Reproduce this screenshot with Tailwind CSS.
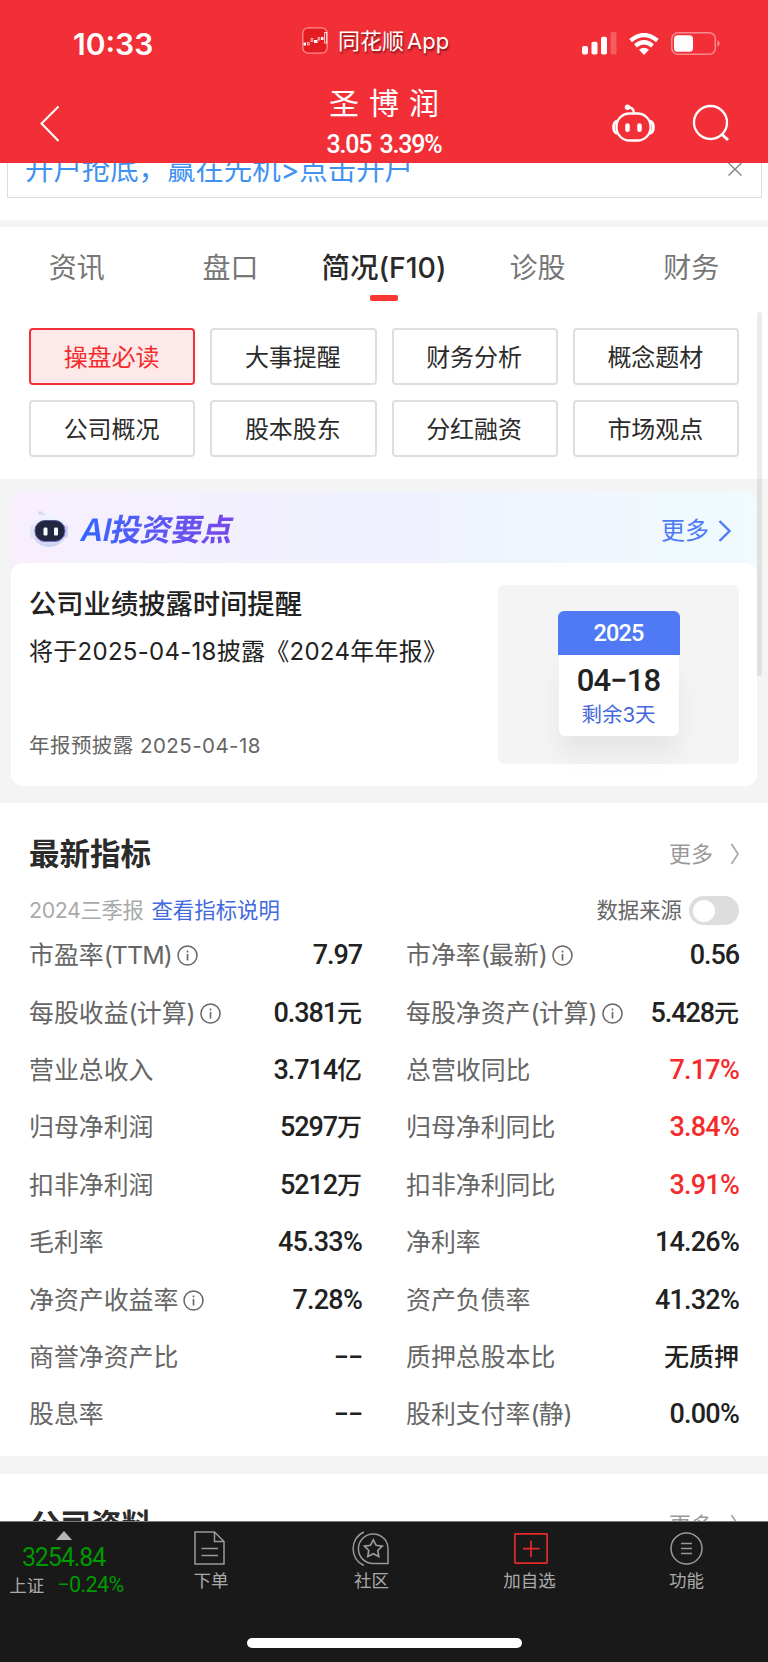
<!DOCTYPE html>
<html lang="zh-CN">
<head>
  <meta charset="UTF-8">
  <meta name="viewport" content="width=device-width, initial-scale=1.0">
  <title>圣博润 - 简况(F10)</title>
  <script src="https://cdn.jsdelivr.net/npm/@tailwindcss/browser@4"></script>
</head>
<body class="bg-white font-['Inter','Noto_Sans_CJK_SC',sans-serif] text-[#222]">
  <div class="relative w-[768px] h-[1662px] overflow-hidden flex flex-col whitespace-nowrap">

    <!-- Header -->
    <header class="bg-[#f22f37] text-white h-[163px] shrink-0">
      <div class="h-[84px] flex items-center">
        <div class="w-[302px] pl-[73px] pt-[3px] text-[30px] leading-none font-semibold">10:33</div>
        <div class="flex items-center w-[280px] pb-[3px]">
          <svg class="w-[26px] h-[27px]" viewBox="0 0 26 27" fill="none">
            <rect x="0.8" y="0.8" width="24.4" height="25.4" rx="5.5" fill="#e31c22" stroke="#fa8d90" stroke-width="1.3"/>
            <path d="M1.500 17h2.500M12 14.500h3.500M19 11.500h2.500" stroke="#fff" stroke-width="3"/>
            <path d="M5.500 15.500h1.800v2.500h-1.800zM9 11.500h1.800v3h-1.800zM16 10.500h1.800v2.500h-1.800z" stroke="#fff" stroke-width="0.7"/>
            <rect x="22.700" y="5.500" width="2" height="10.500" stroke="#fff" stroke-width="0.8"/>
          </svg>
          <span class="ml-[10px] text-[22px] leading-none [text-shadow:1px_2px_2px_rgba(60,0,0,0.6)]">同花顺<span class="ml-[3px]">App</span></span>
        </div>
        <div class="flex items-center gap-[11px] pt-[3px]">
          <svg class="w-[36px] h-[23px]" viewBox="0 0 36 23" fill="#fff">
            <rect x="0" y="14" width="6" height="8.500" rx="1.800"/>
            <rect x="9.500" y="9.700" width="6" height="12.800" rx="1.800"/>
            <rect x="19" y="4.800" width="6" height="17.700" rx="1.800"/>
            <rect x="28.500" y="0" width="6" height="22.500" rx="1.800" opacity="0.22"/>
          </svg>
          <svg class="w-[30px] h-[22px]" viewBox="0 0 30 22" fill="none" stroke="#fff" stroke-width="4.200">
            <path d="M1.600 7.600Q15-3.600 28.400 7.600"/>
            <path d="M6.500 12.800Q15 5.600 23.500 12.800"/>
            <path d="M10 16.800Q15 12.800 20 16.800L15 22z" fill="#fff" stroke="none"/>
          </svg>
          <svg class="ml-[1px] w-[49px] h-[23px]" viewBox="0 0 49 23" fill="none">
            <rect x="0.800" y="0.800" width="43.500" height="21.400" rx="6" stroke="#f98b8f" stroke-width="1.500"/>
            <rect x="3" y="3.200" width="19" height="16.600" rx="3.500" fill="#fff"/>
            <path d="M46.500 8.200q2.200 1 2.200 3.300t-2.200 3.300z" fill="#f98b8f"/>
          </svg>
        </div>
      </div>
      <div class="h-[79px] flex">
        <div class="w-[254px] pl-[39px] pt-[21px]">
          <svg class="w-[22px] h-[38px]" viewBox="0 0 22 38" fill="none" stroke="#fff" stroke-width="2"><path d="M19.500 1.500 2.500 18.500l17 17.500"/></svg>
        </div>
        <div class="w-[260px] flex flex-col items-center">
          <div class="mt-[3px] flex gap-[10px] text-[30px] leading-[32px]"><span>圣</span><span>博</span><span>润</span></div>
          <div class="mt-[12px] font-['Roboto'] text-[25px] leading-[28px] font-medium tracking-[-1.2px] [word-spacing:3px]">3.05 3.39%</div>
        </div>
        <div class="flex pl-[98px] pt-[20px] gap-[37px]">
          <svg class="w-[43px] h-[39px]" viewBox="0 0 43 39" fill="none" stroke="#fff" stroke-width="2.300">
            <rect x="4.500" y="9.500" width="34" height="27" rx="13"/>
            <path d="M5 17c-4.500 1.500-4.500 11 0 12.500M38 17c4.500 1.500 4.500 11 0 12.500" stroke-width="2.800"/>
            <path d="M22 9.500C22 5 19.500 3 15 3"/>
            <circle cx="15.500" cy="3.200" r="2.700" fill="#fff" stroke="none"/>
            <path d="M15.500 21.500v4.200M27.500 21.500v4.200" stroke-width="4.600" stroke-linecap="round"/>
          </svg>
          <svg class="w-[38px] h-[38px]" viewBox="0 0 38 38" fill="none" stroke="#fff" stroke-width="2.300"><circle cx="18.500" cy="18.500" r="16.500"/><path d="M30 30.500l6 5.500" stroke-width="3"/></svg>
        </div>
      </div>
    </header>

    <!-- Ad strip, scrolled under the header -->
    <div class="h-[57px] shrink-0 pl-[7px] pr-[6px]">
      <div class="h-[35px] border border-t-0 border-[#dcdede] overflow-hidden flex justify-between">
        <div class="-mt-[12px] ml-[17px] text-[28.5px] leading-[38px] text-[#3f92ef] tracking-[-0.1px]">开户抢底，赢在先机&gt;点击开户</div>
        <svg class="w-[14px] h-[14px] mr-[19px]" viewBox="0 0 14 14" stroke="#888" stroke-width="1.500"><path d="M0.500 0l13 12.500M13.500 0l-13 12.500"/></svg>
      </div>
    </div>
    <div class="h-[7px] shrink-0 bg-[#f4f4f4]"></div>

    <!-- Tabs -->
    <nav class="h-[101px] shrink-0 grid grid-cols-5 text-center text-[28px] leading-[40px] text-[#777] pt-[21px]">
      <div>资讯</div>
      <div>盘口</div>
      <div class="flex flex-col items-center text-[#2a2a2a] font-medium">
        <span class="text-[28.500px]">简况(F10)</span>
        <span class="mt-[7px] w-[28px] h-[6px] rounded-[2px] bg-[#fb352f]"></span>
      </div>
      <div>诊股</div>
      <div>财务</div>
    </nav>

    <div class="h-[151px] shrink-0 px-[29px] grid grid-cols-4 grid-rows-[57px_57px] gap-[15px] text-[24px] leading-none text-[#2b2b2b]">
      <div class="border-2 border-[#f03238] bg-[#fee9ea] text-[#f52b2b] rounded-[4px] flex items-center justify-center pt-[2px] pr-[1px]">操盘必读</div>
      <div class="border-2 border-[#dedede] rounded-[4px] flex items-center justify-center pt-[2px] pr-[1px]">大事提醒</div>
      <div class="border-2 border-[#dedede] rounded-[4px] flex items-center justify-center pt-[2px] pr-[1px]">财务分析</div>
      <div class="border-2 border-[#dedede] rounded-[4px] flex items-center justify-center pt-[2px] pr-[1px]">概念题材</div>
      <div class="border-2 border-[#dedede] rounded-[4px] flex items-center justify-center pt-[2px] pr-[1px]">公司概况</div>
      <div class="border-2 border-[#dedede] rounded-[4px] flex items-center justify-center pt-[2px] pr-[1px]">股本股东</div>
      <div class="border-2 border-[#dedede] rounded-[4px] flex items-center justify-center pt-[2px] pr-[1px]">分红融资</div>
      <div class="border-2 border-[#dedede] rounded-[4px] flex items-center justify-center pt-[2px] pr-[1px]">市场观点</div>
    </div>

    <!-- AI card -->
    <section class="h-[324px] shrink-0 bg-[#f4f4f4] pt-[12px] pl-[11px] pr-[11px]">
      <div class="h-[295px] rounded-[12px] bg-linear-to-r from-[#f8effe] via-[#eff1fe] to-[#f0fbfe]">
        <div class="h-[72px] flex items-center pl-[18px] pr-[26px]">
          <svg class="w-[40px] h-[38px] mt-[4px]" viewBox="0 0 40 38">
            <defs>
              <linearGradient id="shell" x1="0" y1="0" x2="0" y2="1"><stop offset="0" stop-color="#f2f5fd"/><stop offset="1" stop-color="#ccd3ec"/></linearGradient>
              <linearGradient id="rim" x1="0" y1="0" x2="1" y2="1"><stop offset="0" stop-color="#4a4a78"/><stop offset="1" stop-color="#8b6cf0"/></linearGradient>
            </defs>
            <path d="M11 3q5 0 6 4" fill="none" stroke="#d9e1f1" stroke-width="2" stroke-linecap="round"/>
            <circle cx="11" cy="3" r="2" fill="#cfdaee"/>
            <ellipse cx="20" cy="21" rx="17.500" ry="16" fill="url(#shell)"/>
            <rect x="1" y="15" width="5" height="13" rx="2.500" fill="#dfe4f4"/>
            <rect x="34" y="15" width="5" height="13" rx="2.500" fill="#cbd3ea"/>
            <rect x="6" y="10.500" width="30" height="21" rx="10" fill="#22273f" stroke="url(#rim)" stroke-width="1"/>
            <rect x="14.500" y="17.500" width="4" height="8" rx="1.200" fill="#f3fcff"/>
            <rect x="25" y="17.500" width="4" height="8" rx="1.200" fill="#f3fcff"/>
          </svg>
          <div class="ml-[13px] pt-[6px] text-[31px] leading-[40px] font-bold tracking-[-0.6px] text-transparent bg-clip-text bg-linear-to-r from-[#2d66ff] to-[#7847e8] -skew-x-12"><span class="font-semibold">AI</span>投资要点</div>
          <div class="ml-auto pt-[8px] text-[24px] leading-none text-[#4d7bf8]">更多</div>
          <svg class="ml-[9px] mt-[7px] w-[13px] h-[22px]" viewBox="0 0 13 22" fill="none" stroke="#4d7bf8" stroke-width="2.300"><path d="M1.500 1l10 10-10 10"/></svg>
        </div>
        <div class="h-[223px] bg-white rounded-[12px] flex justify-between pl-[18px] pr-[18px] pt-[22px]">
          <div>
            <div class="mt-[2px] text-[27.300px] leading-[36px] font-medium">公司业绩披露时间提醒</div>
            <div class="mt-[12px] text-[24px] leading-[34px] tracking-[0.28px]">将于2025-04-18披露《2024年年报》</div>
            <div class="mt-[62px] text-[20.500px] leading-[30px] text-[#666] tracking-[0.45px]">年报预披露 2025-04-18</div>
          </div>
          <div class="w-[241px] h-[179px] rounded-[6px] bg-[#f4f4f4] flex flex-col items-center pt-[26px]">
            <div class="z-10 w-[122px] h-[44px] rounded-t-[6px] bg-[#5079f5] text-white font-['Roboto'] text-[23.500px] leading-[44px] text-center font-medium tracking-[-0.8px]">2025</div>
            <div class="w-[120px] h-[81px] rounded-b-[6px] bg-white shadow-[0_18px_24px_rgba(0,0,0,0.06)] text-center">
              <div class="pt-[8px] font-['Roboto'] text-[31px] leading-[36px] font-medium tracking-[-0.9px]">04−18</div>
              <div class="text-[20.500px] leading-[32px] text-[#4468dc]">剩余3天</div>
            </div>
          </div>
        </div>
      </div>
    </section>

    <!-- Latest indicators -->
    <section class="h-[653px] shrink-0 pl-[29px] pr-[29px] pt-[31px]">
      <div class="flex items-center h-[40px] text-[#2b2b2b]">
        <h2 class="text-[30.500px] leading-none font-semibold">最新指标</h2>
        <div class="ml-auto text-[22px] leading-none text-[#999]">更多</div>
        <svg class="ml-[17px] -mt-px w-[9px] h-[22px]" viewBox="0 0 9 22" fill="none" stroke="#aaa" stroke-width="1.800"><path d="M1.500 1l6.500 10-6.500 10"/></svg>
      </div>
      <div class="mt-[22px] flex items-center h-[29px] text-[21.400px] leading-none">
        <span class="text-[#aaa] tracking-[-0.4px]">2024三季报</span>
        <a class="ml-[8px] text-[#4169e1]">查看指标说明</a>
        <span class="ml-auto text-[#666]">数据来源</span>
        <span class="ml-[7px] w-[50px] h-[29px] rounded-full bg-[#ddd] flex items-center pl-[4px]"><span class="w-[22px] h-[22px] rounded-full bg-white"></span></span>
      </div>
      <div id="indicators" class="mt-[2px] grid grid-cols-[333px_333px] gap-x-[44px]"></div>
    </section>

    <div class="h-[18px] shrink-0 bg-[#f4f4f4]"></div>
    <section class="h-[47px] shrink-0 overflow-hidden pl-[30px] pr-[29px] pt-[31px]">
      <div class="flex items-center h-[40px] text-[#2b2b2b]">
        <h2 class="text-[30.500px] leading-none font-semibold">公司资料</h2>
        <div class="ml-auto text-[22px] leading-none text-[#999]">更多</div>
        <svg class="ml-[17px] -mt-px w-[9px] h-[22px]" viewBox="0 0 9 22" fill="none" stroke="#aaa" stroke-width="1.800"><path d="M1.500 1l6.500 10-6.500 10"/></svg>
      </div>
    </section>

    <!-- Bottom bar -->
    <footer class="h-[141px] shrink-0 bg-[#191919] border-t border-[#777] flex flex-col items-center">
      <div class="w-full h-[116px] flex text-[17.500px] leading-[20px] text-[#aaa]">
        <div class="w-[133px] flex flex-col items-center pr-[6px]">
          <svg class="mt-[9px] w-[16px] h-[9px]" viewBox="0 0 16 9" fill="#b5b5b5"><path d="M8 0l8 9H0z"/></svg>
          <div class="mt-[4px] font-['Roboto'] text-[25px] leading-[28px] tracking-[-1.1px] text-[#090]">3254.84</div>
          <div class="mt-[1px] flex items-center gap-[13px] pl-[6px]"><span class="pt-[3px]">上证</span><span class="font-['Roboto'] text-[21.500px] tracking-[-0.6px] text-[#090]">−0.24%</span></div>
        </div>
        <div class="w-[156px] flex flex-col items-center">
          <svg class="mt-[9px] mr-[3px] w-[31px] h-[34px]" viewBox="0 0 31 34" fill="none" stroke="#999" stroke-width="1.500"><path d="M1 1h19.500L30 10.500V33H1zM20.500 1v9.500H30M7.500 17.500h16.500M7.500 24.500h16.500"/></svg>
          <span class="mt-[6px]">下单</span>
        </div>
        <div class="w-[165px] flex flex-col items-center">
          <svg class="mt-[9px] mr-[2px] w-[37px] h-[35px]" viewBox="0 0 37 35" fill="none" stroke="#999" stroke-width="1.500">
            <path d="M12 1C-2.500 7-2.500 28.500 12 34.500"/>
            <path d="M21.500 32.500a14.800 14.800 0 1 1 14.500-15v15z"/>
            <path d="M21.300 8.800l2.800 5.500 6.100.9-4.400 4.300 1 6-5.500-2.800-5.500 2.800 1-6-4.400-4.300 6.100-.9z" stroke-width="1.700"/>
          </svg>
          <span class="mt-[5px]">社区</span>
        </div>
        <div class="w-[151px] flex flex-col items-center">
          <svg class="mt-[11px] ml-[2px] w-[34px] h-[31px]" viewBox="0 0 34 31" fill="none" stroke="#e52a2a" stroke-width="1.700"><rect x="0.900" y="0.900" width="32.200" height="29.200" rx="0.500"/><path d="M17 7.500v16.500M9 15.700h16.500"/></svg>
          <span class="mt-[7px]">加自选</span>
        </div>
        <div class="flex-1 flex flex-col items-center">
          <svg class="mt-[10px] w-[33px] h-[33px]" viewBox="0 0 33 33" fill="none" stroke="#999" stroke-width="1.500"><circle cx="16.500" cy="16.500" r="15.500"/><path d="M11 11.500h11M11 16.500h11M11 21.500h11"/></svg>
          <span class="mt-[6px]">功能</span>
        </div>
      </div>
      <div class="w-[275px] h-[10px] rounded-full bg-white"></div>
    </footer>

    <!-- Scroll indicator -->
    <div class="absolute left-[757px] top-[312px] w-[5px] h-[364px] rounded-full bg-black/8"></div>
  </div>

  <script>
    const indicators = [
      ['市盈率(TTM)', '7.97', true], ['市净率(最新)', '0.56', true],
      ['每股收益(计算)', '0.381元', true], ['每股净资产(计算)', '5.428元', true],
      ['营业总收入', '3.714亿'], ['总营收同比', '7.17%', false, true],
      ['归母净利润', '5297万'], ['归母净利同比', '3.84%', false, true],
      ['扣非净利润', '5212万'], ['扣非净利同比', '3.91%', false, true],
      ['毛利率', '45.33%'], ['净利率', '14.26%'],
      ['净资产收益率', '7.28%', true], ['资产负债率', '41.32%'],
      ['商誉净资产比', '−−'], ['质押总股本比', '无质押'],
      ['股息率', '−−'], ['股利支付率(静)', '0.00%']
    ];
    const infoIcon = `<svg class="ml-[5px] w-[21px] h-[21px]" viewBox="0 0 21 21" fill="none" stroke="#666" stroke-width="1.500"><circle cx="10.500" cy="10.500" r="9.500"/><path d="M10.500 9v6.500M10.500 5.500v2" stroke-width="1.600"/></svg>`;

    document.getElementById('indicators').innerHTML = indicators.map(([label, value, info, up]) => `
      <div class="flex items-center h-[57.400px]">
        <span class="text-[24.900px] leading-none text-[#666]">${label.replace(/[()A-Z]+/g, '<span class="tracking-[-0.9px]">$&</span>')}</span>
        ${info ? infoIcon : ''}
        <span class="ml-auto font-['Roboto','Noto_Sans_CJK_SC',sans-serif] font-medium text-[27px] leading-none ${value.includes('%') ? 'tracking-[-0.8px]' : 'tracking-[-1.1px]'} ${up ? 'text-[#f52b2b]' : 'text-[#222]'}">${value.replace(/[^\d.%−]+/, '<span class="text-[25px] tracking-normal">$&</span>')}</span>
      </div>`).join('');
  </script>
</body>
</html>
